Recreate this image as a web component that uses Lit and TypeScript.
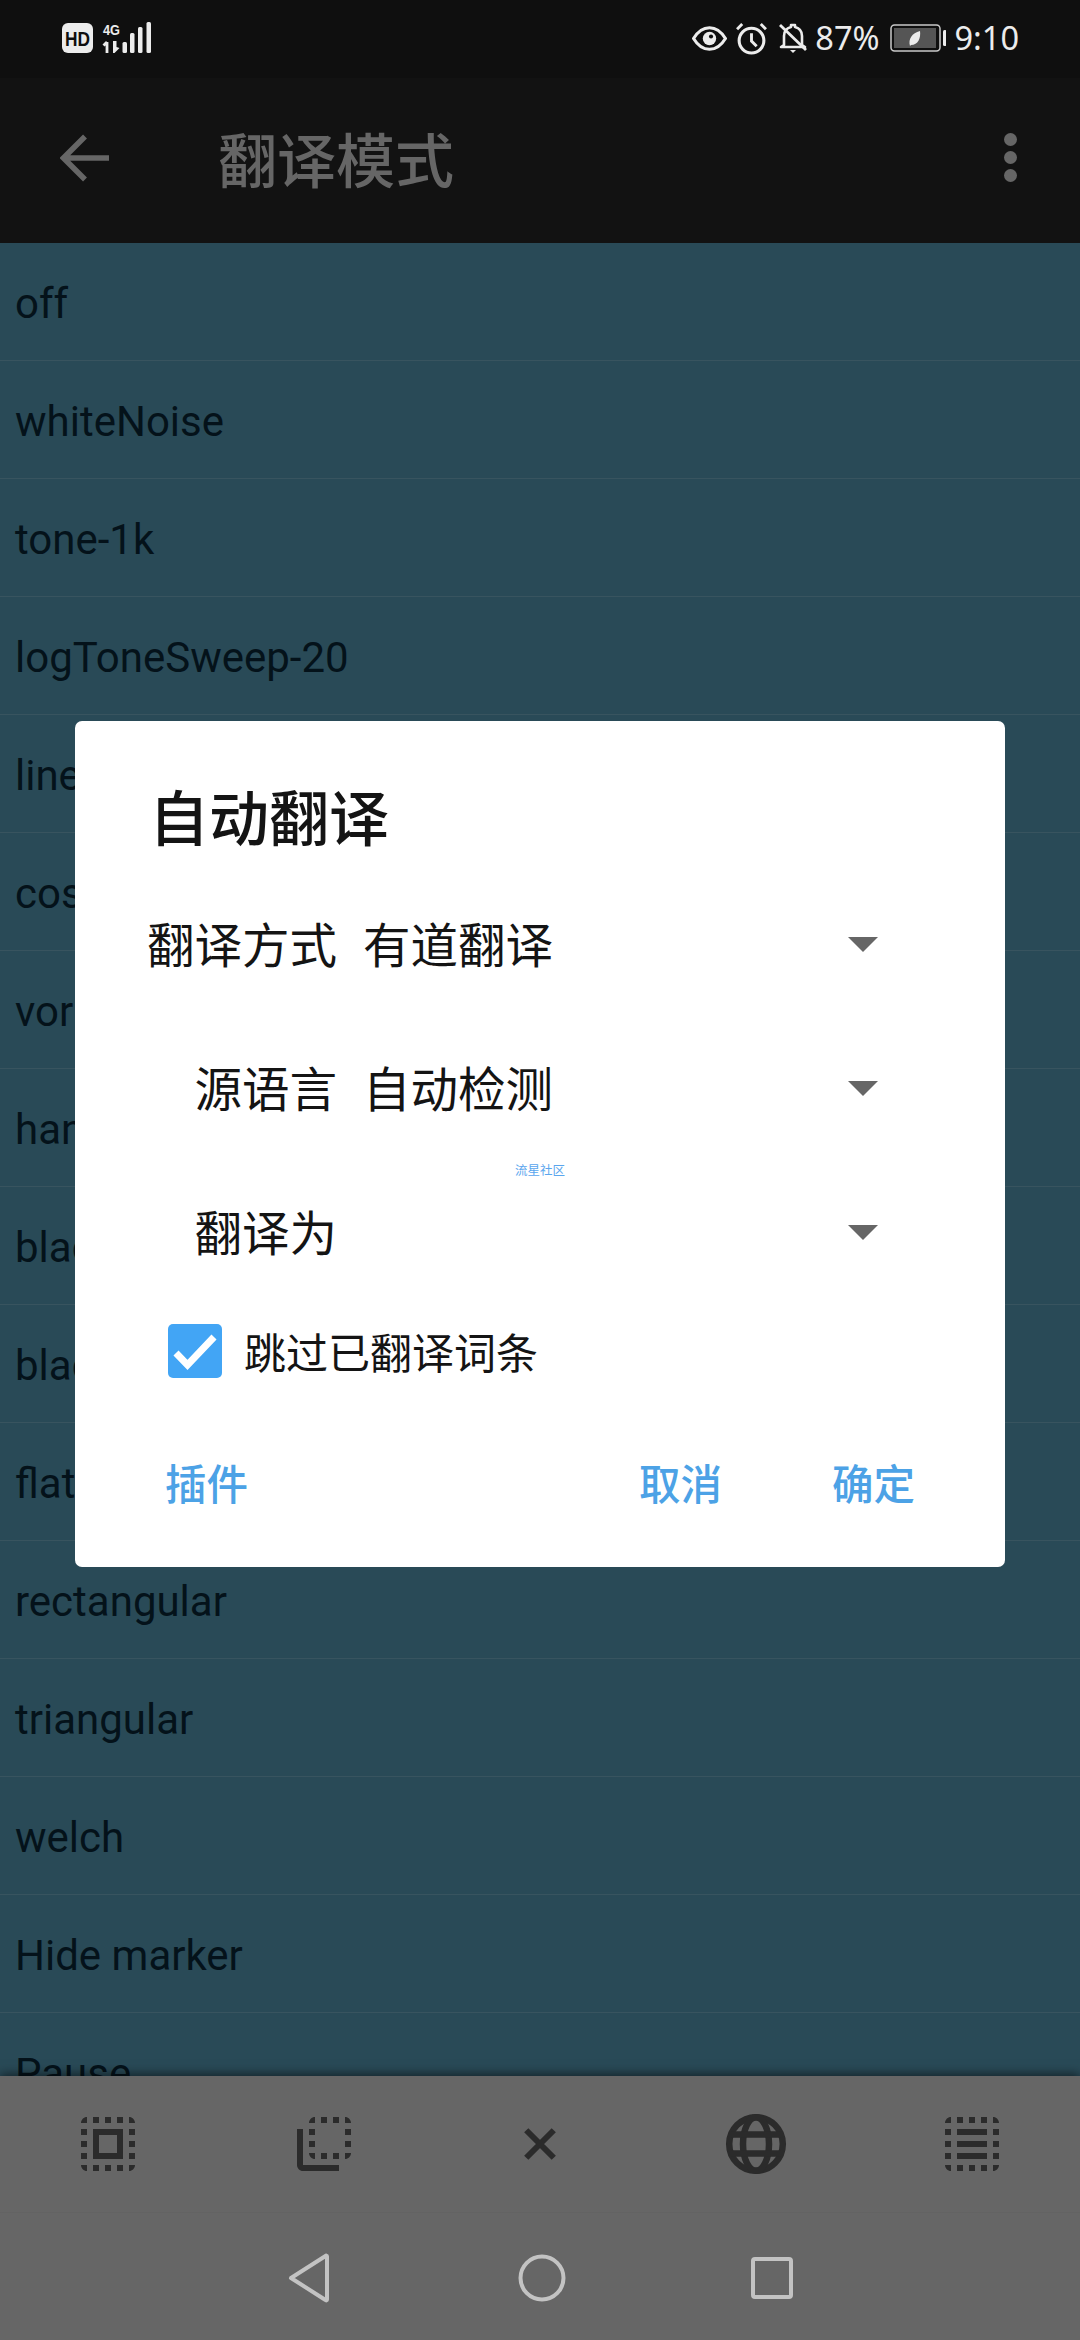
import { LitElement, html, css, svg } from "lit";
import { customElement } from "lit/decorators.js";

const ROWS = ["off","whiteNoise","tone-1k","logToneSweep-20","linearSweep","cosine","vorbis","hann","blackman","blackman-harris","flattop","rectangular","triangular","welch","Hide marker","Pause"];

const BORDER = "M3 5h2V3c-1.1 0-2 .9-2 2zm0 8h2v-2H3v2zm4 8h2v-2H7v2zM3 9h2V7H3v2zm10-6h-2v2h2V3zm6 0v2h2c0-1.1-.9-2-2-2zM5 21v-2H3c0 1.1.9 2 2 2zm-2-4h2v-2H3v2zM9 3H7v2h2V3zm2 18h2v-2h-2v2zm8-8h2v-2h-2v2zm0 8c1.1 0 2-.9 2-2h-2v2zm0-12h2V7h-2v2zm0 8h2v-2h-2v2zm-4 4h2v-2h-2v2zm0-16h2V3h-2v2z";

const tool = (inner: unknown, size = 72) => html`<svg class="tool" width=${size} height=${size} viewBox="0 0 24 24" fill="#2b2b2b">${inner}</svg>`;

@customElement("app-root")
export class AppRoot extends LitElement {
  static styles = css`
    :host { display: block; width: 1080px; height: 2340px; position: relative; overflow: hidden; font-family: "Noto Sans CJK SC", "Liberation Sans", sans-serif; }
    .page { height: 100%; display: flex; flex-direction: column; background: #294a57; }
    .status { height: 78px; flex: none; background: #0f0f0f; display: flex; align-items: center; padding: 0 61px 2px 62px; box-sizing: border-box; color: #ececec; }
    .status svg { display: block; flex: none; }
    .status-left { display: flex; align-items: flex-start; }
    .status-right { margin-left: auto; display: flex; align-items: center; }
    .st-text { font-family: "Noto Sans", "Open Sans", sans-serif; font-size: 32.500px; line-height: 40px; color: #ececec; }
    .eye { margin-right: 8px; }
    .alarm { margin-right: 11px; }
    .bell { margin-right: 8px; }
    .pct { margin-right: 10px; }
    .batt { margin-right: 9px; }
    .toolbar { height: 165px; flex: none; background: #121212; display: flex; align-items: center; color: #666; box-sizing: border-box; padding: 0 0 6px 60px; }
    .toolbar-title { margin-left: 109px; font-size: 59px; line-height: 70px; font-weight: 500; color: #666; }
    .dots { margin-left: auto; margin-right: 63px; display: flex; flex-direction: column; gap: 5px; }
    .dots i { display: block; width: 13px; height: 13px; border-radius: 50%; background: #666; }
    .list { flex: 1; min-height: 0; overflow: hidden; position: relative; }
    .row { height: 118px; box-sizing: border-box; border-bottom: 1px solid #38545f; padding: 4px 0 0 15px; display: flex; align-items: center; font-family: Roboto, sans-serif; font-size: 42px; color: #04121a; }
    .panel { flex: none; height: 264px; background: #666; position: relative; box-shadow: 0 -2px 10px rgba(0,0,0,.55); display: flex; flex-direction: column; }
    .tools { height: 137px; display: flex; align-items: center; border-bottom: 1px solid #636363; box-sizing: border-box; }
    .tools > div { flex: 1; display: flex; justify-content: center; }
    .tool { display: block; }
    .nav { flex: 1; display: flex; align-items: center; justify-content: center; gap: 183px; padding-top: 2px; }
    .nav svg { display: block; fill: none; stroke: #c3c3c3; stroke-width: 4; stroke-linejoin: round; }
    .nav .tri { margin-right: 3px; }
    .dialog { position: absolute; left: 75px; top: 721px; width: 930px; height: 846px; background: #fff; border-radius: 7px; color: #141414; }
    .title { height: 150px; box-sizing: border-box; padding: 55px 0 0 74px; font-size: 60px; line-height: 78px; font-weight: 500; }
    .field { height: 144px; display: grid; grid-template-columns: 262px auto 1fr; align-items: center; column-gap: 26px; font-size: 47.500px; line-height: 64px; }
    .label { text-align: right; }
    .field-value { white-space: nowrap; }
    .arrow { justify-self: end; margin-right: 127px; margin-top: 2px; width: 0; height: 0; border-left: 15px solid transparent; border-right: 15px solid transparent; border-top: 15px solid #666; }
    .check-row { height: 96px; display: flex; align-items: center; padding-left: 93px; gap: 22px; font-size: 42px; line-height: 56px; }
    .check { width: 54px; height: 54px; background: #42a5f5; border-radius: 5px; display: block; flex: none; }
    .actions { height: 166px; display: flex; align-items: center; padding: 0 90px; font-size: 41.500px; font-weight: 500; color: #4ca2e6; }
    .actions .spacer { flex: 1; }
    .actions span + span { margin-left: 110px; }
    .mark { position: absolute; left: 440px; top: 441px; font-size: 12.500px; line-height: 16px; color: #5aa6ee; }
  `;

  render() {
    return html`
      <div class="page">
        <div class="status">
          <div class="status-left">
            <svg width="90" height="32" viewBox="0 0 90 32">
              <rect x="0" y="1" width="31" height="30" rx="6" fill="#ececec"></rect>
              <text x="15.500" y="24" text-anchor="middle" font-family="Liberation Sans" font-weight="700" font-size="20" fill="#0f0f0f" textLength="25" lengthAdjust="spacingAndGlyphs">HD</text>
              <text x="41" y="13" font-family="Liberation Sans" font-weight="700" font-size="15" fill="#ececec" textLength="17" lengthAdjust="spacingAndGlyphs">4G</text>
              <path d="M45 20v11M45 20l-3.500 3.500" stroke="#ececec" stroke-width="2.800" fill="none"></path>
              <path d="M51 19v12h1.500l5-5-3-1v-6z" fill="#ececec"></path>
              <rect x="60.500" y="20" width="4.500" height="11" rx="1.500" fill="#ececec"></rect>
              <rect x="68" y="11" width="4.500" height="20" rx="1.500" fill="#ececec"></rect>
              <rect x="76" y="5" width="4.500" height="26" rx="1.500" fill="#ececec"></rect>
              <rect x="84.500" y="0" width="4.500" height="31" rx="1.500" fill="#ececec"></rect>
            </svg>
          </div>
          <div class="status-right">
            <svg class="eye" width="35" height="27" viewBox="0 0 34 26">
              <path d="M1.500 13C6 5.500 11 2.500 17 2.500S28 5.500 32.500 13C28 20.500 23 23.500 17 23.500S6 20.500 1.500 13z" fill="none" stroke="#ececec" stroke-width="3"></path>
              <circle cx="17" cy="13" r="6.500" fill="#ececec"></circle>
              <circle cx="18.500" cy="11" r="2" fill="#0f0f0f"></circle>
            </svg>
            <svg class="alarm" width="33" height="33" viewBox="0 0 32 32">
              <circle cx="16" cy="18" r="12" fill="none" stroke="#ececec" stroke-width="3"></circle>
              <path d="M16 11v7.500l5 5M2 7l5-5M30 7l-5-5" fill="none" stroke="#ececec" stroke-width="2.800"></path>
            </svg>
            <svg class="bell" width="28" height="30" viewBox="0 0 28 30">
              <path d="M5 22V13C5 8 8 5 12 4V2h4v2c4 1 7 4 7 9v9l3 2H2z" fill="none" stroke="#ececec" stroke-width="2.600" stroke-linejoin="round"></path>
              <path d="M1 2l26 25" stroke="#ececec" stroke-width="2.800" fill="none"></path>
              <path d="M11 27h6l-3 3z" fill="#ececec"></path>
            </svg>
            <span class="st-text pct">87%</span>
            <svg class="batt" width="56" height="28" viewBox="0 0 56 28">
              <rect x="1" y="1" width="49" height="26" rx="3.500" fill="none" stroke="#c9c9c9" stroke-width="1.500"></rect>
              <rect x="4" y="4" width="42" height="20" fill="#555"></rect>
              <path d="M20 22c-2-7 2-13 10-15 1 7-2 14-9 14z" fill="#ececec"></path>
              <rect x="53" y="6" width="3.500" height="16" rx="1.500" fill="#ececec"></rect>
            </svg>
            <span class="st-text">9:10</span>
          </div>
        </div>

        <div class="toolbar">
          <svg width="49" height="48" viewBox="0 0 49 48" fill="none" stroke="#666" stroke-width="5.500"><path d="M49 24H5M25 2.500L3.500 24 25 45.500"></path></svg>
          <div class="toolbar-title">翻译模式</div>
          <div class="dots"><i></i><i></i><i></i></div>
        </div>

        <div class="list">
          ${ROWS.map((r) => html`<div class="row">${r}</div>`)}
        </div>

        <div class="panel">
          <div class="tools">
            <div>${tool(svg`<path d=${BORDER + "M7 17h10V7H7v10zm2-8h6v6H9V9z"}></path>`)}</div>
            <div>${tool(svg`<path d="M9 7H7v2h2V7zm0 4H7v2h2v-2zm0-8c-1.110 0-2 .9-2 2h2V3zm4 12h-2v2h2v-2zm6-12v2h2c0-1.100-.9-2-2-2zm-6 0h-2v2h2V3zM9 17v-2H7c0 1.100.89 2 2 2zm10-4h2v-2h-2v2zm0-4h2V7h-2v2zm0 8c1.100 0 2-.9 2-2h-2v2zM5 7H3v12c0 1.100.89 2 2 2h12v-2H5V7zm10-2h2V3h-2v2zm0 12h2v-2h-2v2z"></path>`)}</div>
            <div>${tool(svg`<path d="M6.500 6.500l11 11M17.500 6.500l-11 11" fill="none" stroke="#2b2b2b" stroke-width="2.400"></path>`, 60)}</div>
            <div>
              <svg class="tool" width="72" height="72" viewBox="0 0 72 72" fill="none" stroke="#2b2b2b" stroke-width="6.500">
                <circle cx="36" cy="36" r="26.800"></circle>
                <ellipse cx="36" cy="36" rx="13" ry="26.800"></ellipse>
                <path d="M11 26.500h50M11 45.500h50"></path>
              </svg>
            </div>
            <div>${tool(svg`<path d=${BORDER + "M7 7h10v2H7zM7 11h10v2H7zM7 15h10v2H7z"}></path>`)}</div>
          </div>
          <div class="nav">
            <svg class="tri" width="44" height="50" viewBox="0 0 44 50"><path d="M40 3.500V46.500c0 1-.9 1.200-1.500.5L4 25 38.500 3c.6-.6 1.500-.5 1.500.5z"></path></svg>
            <svg width="50" height="50" viewBox="0 0 50 50"><circle cx="25" cy="25" r="21.500"></circle></svg>
            <svg width="44" height="44" viewBox="0 0 44 44"><rect x="3" y="3" width="38" height="38" rx="2"></rect></svg>
          </div>
        </div>
      </div>

      <div class="dialog">
        <div class="title">自动翻译</div>
        <div class="field"><span class="label">翻译方式</span><span class="field-value">有道翻译</span><i class="arrow"></i></div>
        <div class="field"><span class="label">源语言</span><span class="field-value">自动检测</span><i class="arrow"></i></div>
        <div class="field"><span class="label">翻译为</span><span class="field-value"></span><i class="arrow"></i></div>
        <div class="check-row">
          <svg class="check" viewBox="0 0 54 54"><path d="M8 29l11.500 12L46 13" fill="none" stroke="#fff" stroke-width="7"></path></svg>
          <span>跳过已翻译词条</span>
        </div>
        <div class="actions"><span>插件</span><div class="spacer"></div><span>取消</span><span>确定</span></div>
        <div class="mark">流星社区</div>
      </div>
    `;
  }
}
